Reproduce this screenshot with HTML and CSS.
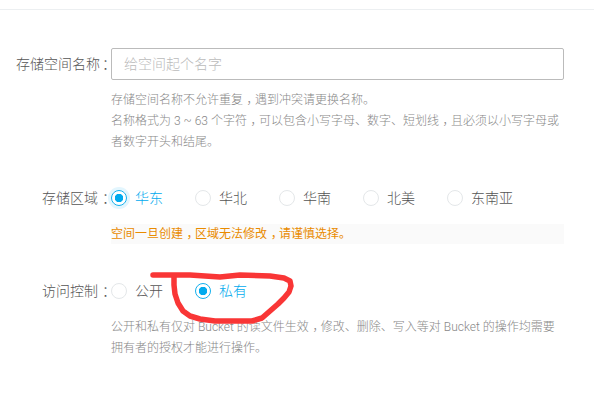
FILE: index.html
```html
<!DOCTYPE html>
<html lang="zh-CN">
<head>
<meta charset="utf-8">
<title>存储空间</title>
<link rel="stylesheet" href="styles.css">
</head>
<body>
<main class="page">
  <form class="form">
    <div class="row row-name">
      <label class="label">存储空间名称<span class="colon">：</span></label>
      <div class="field">
        <input class="input" type="text" placeholder="给空间起个名字">
        <p class="help help-name">存储空间名称不允许重复<span class="mark">，</span>遇到冲突请更换名称。<br>名称格式为 3 ~ 63 个字符<span class="mark">，</span>可以包含小写字母、数字、短划线<span class="mark">，</span>且必须以小写字母或者数字开头和结尾。</p>
      </div>
    </div>
    <div class="row row-region">
      <label class="label">存储区域<span class="colon">：</span></label>
      <div class="field">
        <div class="radios">
          <span class="radio on"><i class="dot"></i>华东</span>
          <span class="radio"><i class="dot"></i>华北</span>
          <span class="radio"><i class="dot"></i>华南</span>
          <span class="radio"><i class="dot"></i>北美</span>
          <span class="radio"><i class="dot"></i>东南亚</span>
        </div>
        <p class="warn">空间一旦创建<span class="mark">，</span>区域无法修改<span class="mark">，</span>请谨慎选择。</p>
      </div>
    </div>
    <div class="row row-access">
      <label class="label">访问控制<span class="colon">：</span></label>
      <div class="field">
        <div class="radios">
          <span class="radio"><i class="dot"></i>公开</span>
          <span class="radio on plain"><i class="dot"></i>私有</span>
        </div>
        <p class="help help-access">公开和私有仅对 Bucket 的读文件生效<span class="mark">，</span>修改、删除、写入等对 Bucket 的操作均需要拥有者的授权才能进行操作。</p>
      </div>
    </div>
  </form>
  <svg class="scribble" width="594" height="411" viewBox="0 0 594 411" aria-hidden="true">
    <path d="M153 275 L190 275 L220 277 L240 275 L270 276 L284 278 L290 281 L291 286 L289 292 L284 298 L278 304 L270 311 L262 318 L252 321 L235 321 L215 321 L200 319 L190 316 L183 311 L178 303 L175 294 L174 285 L174 277" fill="none" stroke="#f93636" stroke-width="5.5" stroke-linecap="round" stroke-linejoin="round"/>
  </svg>
</main>
</body>
</html>
```
FILE: styles.css
```css
* { box-sizing: border-box; }
html, body { margin: 0; padding: 0; background: #fff; }
body {
  width: 594px;
  height: 411px;
  overflow: hidden;
  font-family: Roboto, "Noto Sans CJK SC", sans-serif;
  color: #666;
}
.page {
  position: relative;
  height: 402px;
  margin-top: 9px;
  border-top: 1px solid #eceff1;
}
.form {
  display: flex;
  flex-direction: column;
  padding: 38px 30px 0 0;
}
.row { display: flex; }
.row-region { margin-top: 33px; }
.row-access { margin-top: 35px; }
.label {
  flex: 0 0 114px;
  margin-right: -3px;
  text-align: right;
  font-size: 14px;
  font-weight: 300;
  line-height: 32px;
  color: #555;
  white-space: nowrap;
}
.row-region .label, .row-access .label { line-height: 24px; }
.colon { padding-left: 2px; margin-right: -2px; }
.row-region .colon, .row-access .colon { padding-left: 4px; }
.mark { padding-left: .3em; margin-right: -.3em; }
.field { flex: 1; position: relative; }
.input {
  display: block;
  width: 100%;
  height: 32px;
  padding: 0 12px;
  border: 1px solid #bbb;
  border-radius: 2px;
  font: 300 14px Roboto, "Noto Sans CJK SC", sans-serif;
  color: #666;
  outline: 0;
}
.input::placeholder { color: #bbb; opacity: 1; }
.help {
  margin: 0;
  font-size: 12px;
  font-weight: 300;
  line-height: 21px;
  color: #888;
}
.help-name { margin-top: 10px; }
.help-access { margin-top: 14px; }
.radios { display: flex; height: 24px; align-items: center; }
.radio {
  display: flex;
  align-items: center;
  width: 84px;
  font-size: 14px;
  font-weight: 300;
  line-height: 24px;
  color: #555;
}
.dot {
  flex: none;
  width: 16px;
  height: 16px;
  margin-right: 8px;
  border: 1px solid #e4e7e9;
  border-radius: 50%;
  background: #fff;
}
.radio.on { color: #00aaee; }
.radio.on .dot {
  border: 1.5px solid #12b0ee;
  background: radial-gradient(circle, #00aaee 0 4px, #fff 4.5px);
  box-shadow: 0 0 0 3px #e3f6fe;
}
.radio.on.plain .dot { box-shadow: none; }
.warn {
  margin: 14px 0 0;
  height: 20px;
  font-size: 12px;
  line-height: 20px;
  color: #e98b00;
  background: #fafafa;
}
.scribble { position: absolute; left: 0; top: -10px; pointer-events: none; }
```
